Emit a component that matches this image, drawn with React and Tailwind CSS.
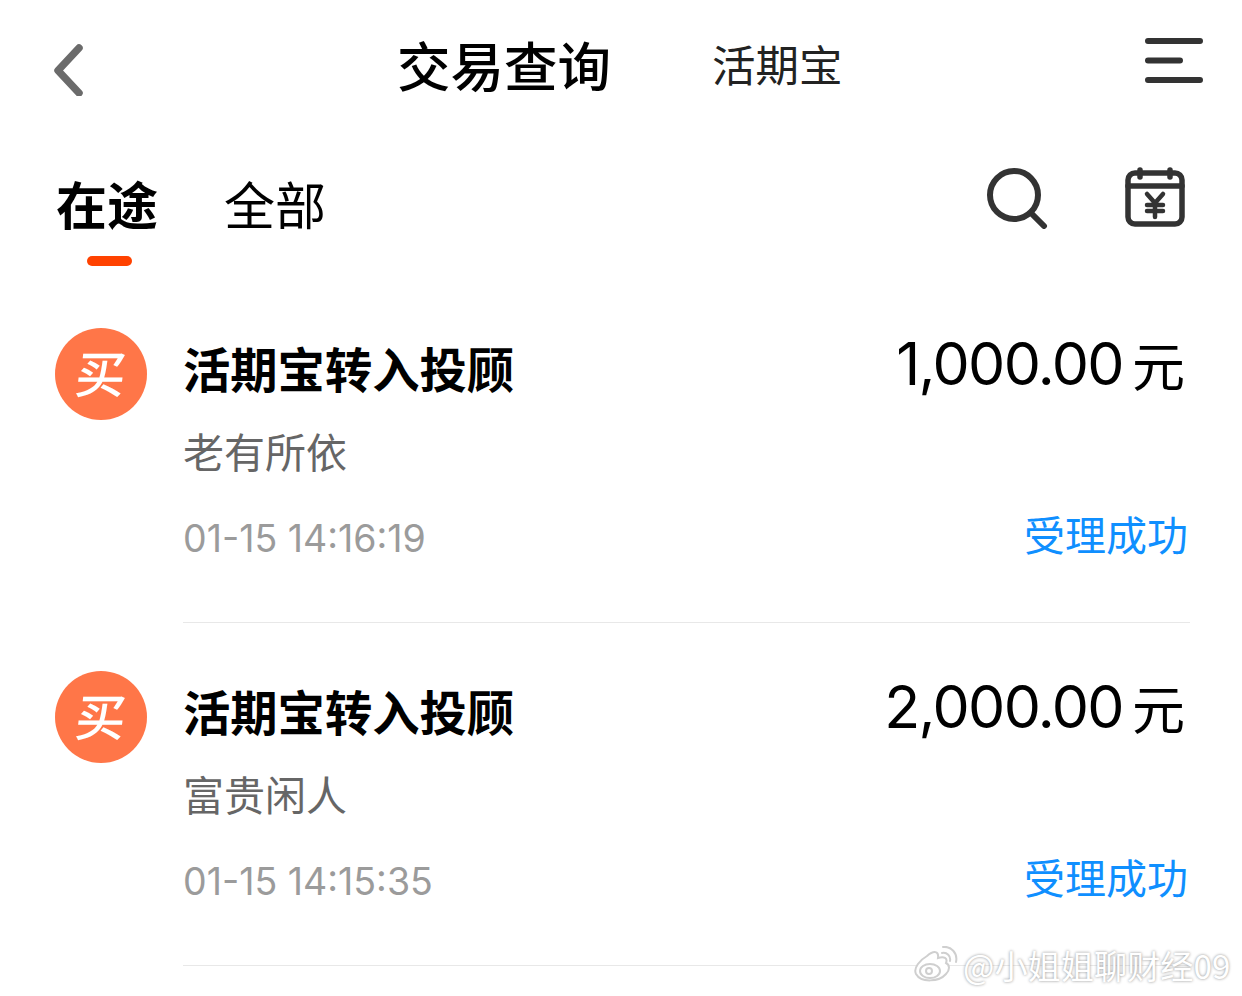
import React from "react";

const cjk = "font-['Noto_Sans_CJK_SC','Liberation_Sans',sans-serif]";

const records = [
  { amount: "1,000.00", fund: "老有所依", time: "01-15 14:16:19" },
  { amount: "2,000.00", fund: "富贵闲人", time: "01-15 14:15:35" },
];

const BackIcon = () => (
  <svg width="34" height="56" viewBox="0 0 34 56" fill="none" stroke="#6b6b6b" strokeWidth="7.5" strokeLinecap="round" strokeLinejoin="round">
    <path d="M27 8 L6 30.5 L27 53" />
  </svg>
);

const MenuIcon = () => (
  <svg width="60" height="48" viewBox="0 0 60 48" fill="none" stroke="#333" strokeWidth="6" strokeLinecap="round">
    <path d="M4 3 H56 M4 22.5 H36 M4 42 H56" />
  </svg>
);

const SearchIcon = () => (
  <svg width="62" height="62" viewBox="0 0 62 62" fill="none" stroke="#333" strokeWidth="6" strokeLinecap="round">
    <circle cx="28" cy="28" r="24" />
    <path d="M46 47 L58 59" />
  </svg>
);

const CalendarIcon = () => (
  <svg width="60" height="60" viewBox="0 0 60 60" fill="none" stroke="#333" strokeWidth="5.5" strokeLinecap="round" strokeLinejoin="round">
    <rect x="3" y="6" width="54" height="51" rx="7" />
    <path d="M3 19 H57 M15 3 V10 M45 3 V10" />
    <path d="M22 27 L30 36 L38 27 M22 38 H38 M22 44 H38 M30 36 V50" strokeWidth="4.5" />
  </svg>
);

const WeiboIcon = () => (
  <svg width="46" height="38" viewBox="0 0 46 38" fill="none" stroke="#cfcfcf" strokeWidth="2">
    <path d="M14 10 C21 4 26 5 25 12 C31 10 35 12 33 17 C37 19 37 24 33 28 C26 36 8 37 3 28 C0 22 7 14 14 10 Z" fill="#fff" />
    <ellipse cx="17" cy="25" rx="10" ry="7" />
    <circle cx="16" cy="25" r="3" />
    <path d="M29 7 C34 6 38 10 37 15 M30 1 C38 0 45 7 43 16" strokeLinecap="round" />
  </svg>
);

const RecordRow = ({ amount, fund, time }) => (
  <div className="flex h-[343px] pl-[55px] pr-[52px]">
    <div className="mt-[28px] w-[92px] h-[92px] shrink-0 rounded-full bg-[#ff7648] flex items-center justify-center">
      <span className={`${cjk} -mt-[7px] text-white text-[50px] leading-none font-medium -skew-x-6`}>买</span>
    </div>
    <div className="ml-[36px] flex-1 border-b border-[#e8e8e8] h-[323px] flex flex-col">
      <div className="flex justify-between items-start mr-[5px] h-[106px]">
        <div className={`${cjk} mt-[34px] text-[47.3px] leading-[68px] font-bold text-black`}>活期宝转入投顾</div>
        <div className={`${cjk} mt-[28px] text-[56px] leading-[72px] text-black flex items-baseline`}>
          <span className="font-['Inter',sans-serif] text-[59px] tracking-[-1.6px] -translate-y-[2px]">{amount}</span>
          <span className="ml-[9px] text-[53px]">元</span>
        </div>
      </div>
      <div className={`${cjk} mt-[14px] text-[41px] leading-[60px] text-[#666]`}>{fund}</div>
      <div className="mt-[28px] flex justify-between items-center">
        <span className="font-['Inter',sans-serif] text-[37.5px] leading-[50px] text-[#9b9b9b]">{time}</span>
        <span className={`${cjk} mb-[12px] text-[41px] leading-[50px] text-[#0f8fff] mr-[2px]`}>受理成功</span>
      </div>
    </div>
  </div>
);

export default function App() {
  return (
    <div className="relative w-[1242px] h-[996px] bg-white overflow-hidden">
      <header className="relative flex items-center h-[136px] pl-[52px] pr-[38px]">
        <BackIcon />
        <div className={`${cjk} ml-[311px] -mt-[8px] text-[53.5px] leading-[70px] font-medium text-black`}>交易查询</div>
        <div className={`${cjk} ml-[101px] -mt-[8px] text-[43.5px] leading-[60px] text-[#222]`}>活期宝</div>
        <div className="ml-auto -mt-[12px]"><MenuIcon /></div>
      </header>

      <div className="flex h-[164px] pl-[56px] pr-[57px]">
        <div className="flex flex-col items-center w-[102px]">
          <div className={`${cjk} mt-[29px] text-[51px] leading-[76px] font-bold text-black`}>在途</div>
          <div className="mt-[15px] ml-[4px] w-[45px] h-[10px] rounded-full bg-[#ff4200]" />
        </div>
        <div className={`${cjk} ml-[66px] mt-[29px] text-[51px] leading-[76px] text-black`}>全部</div>
        <div className="ml-auto flex items-start gap-[77px] mt-[31px]">
          <SearchIcon />
          <CalendarIcon />
        </div>
      </div>

      <div>
        {records.map((r) => (
          <RecordRow key={r.time} {...r} />
        ))}
      </div>

      {/* weibo watermark */}
      <div className="absolute left-[913px] top-[943px] flex items-center gap-[4px]">
        <WeiboIcon />
        <span className={`${cjk} text-[33.2px] leading-[44px] text-white [text-shadow:0_0_3px_#8a8a8a]`}>@小姐姐聊财经09</span>
      </div>
    </div>
  );
}
